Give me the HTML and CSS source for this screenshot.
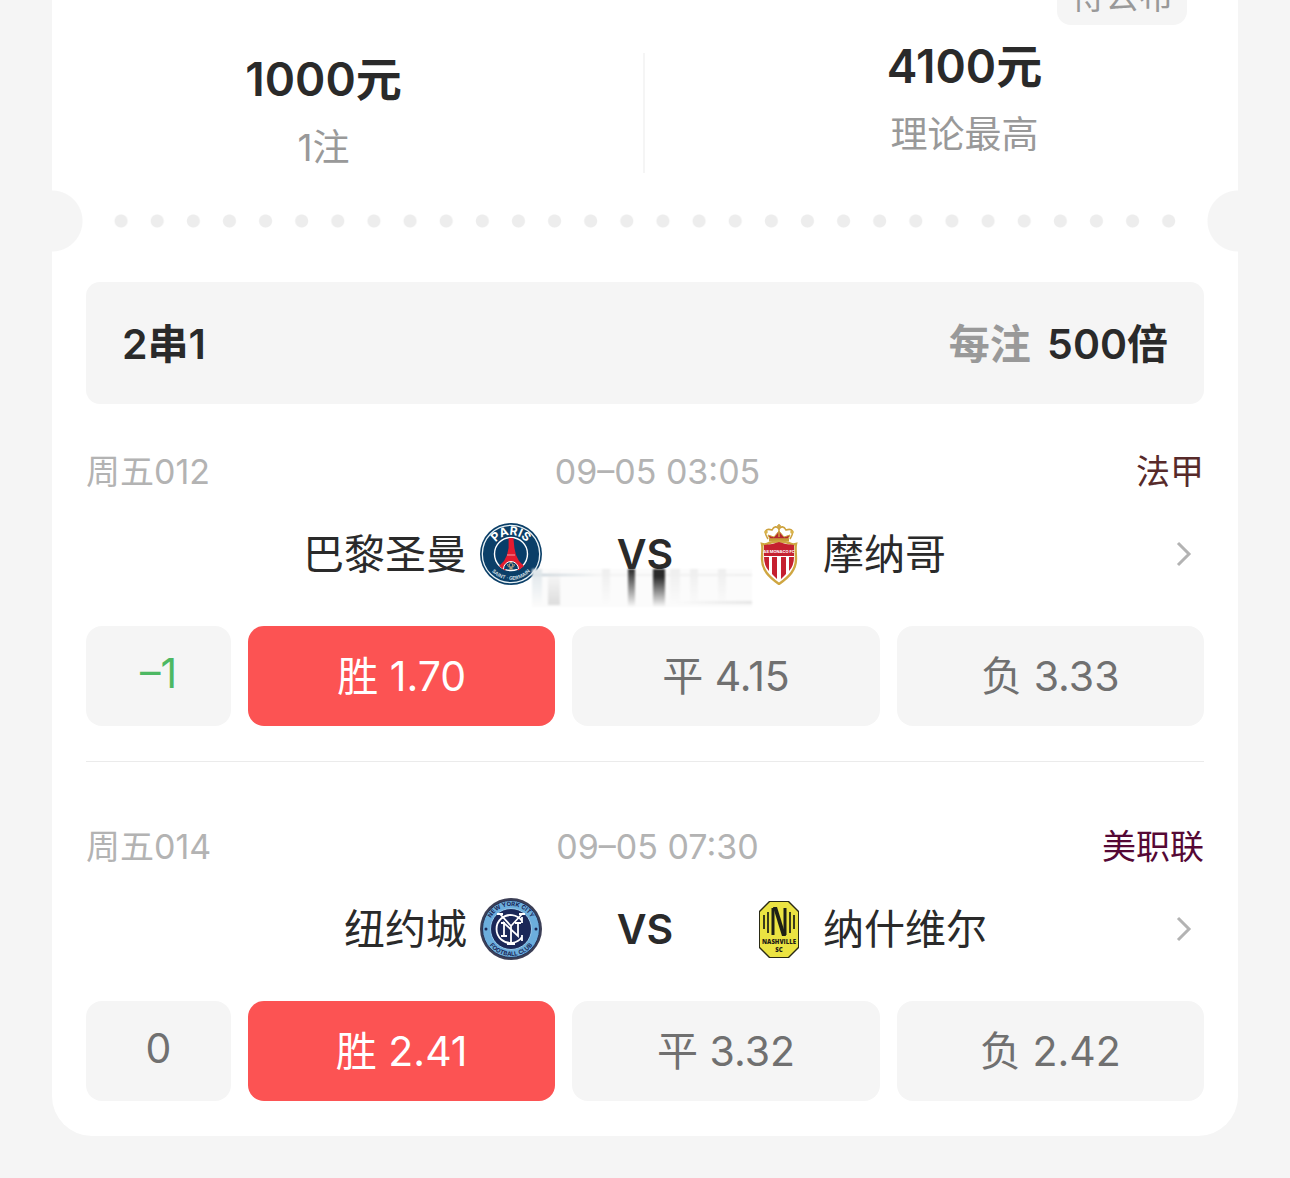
FILE: index.html
```html
<!DOCTYPE html>
<html lang="zh-CN">

<head>
    <meta charset="UTF-8">
    <meta name="viewport" content="width=device-width, initial-scale=1.0">
    <title>2串1</title>
    <link rel="stylesheet" href="styles.css">
</head>

<body>
    <main class="ticket">
        <section class="summary">
            <span class="badge">待公布</span>
            <div class="summary-item stake">
                <strong>1000元</strong>
                <span>1注</span>
            </div>
            <div class="summary-item prize">
                <strong>4100元</strong>
                <span>理论最高</span>
            </div>
        </section>

        <div class="perforation">
            <div class="dots"></div>
        </div>

        <div class="content">
            <div class="pass-bar">
                <strong>2串1</strong>
                <div class="multiple"><span>每注</span> <strong>500倍</strong></div>
            </div>

            <article class="match">
                <div class="match-info">
                    <span>周五012</span>
                    <time>09–05 03:05</time>
                    <span class="league ligue1">法甲</span>
                </div>
                <div class="teams">
                    <div class="team home">
                        <span>巴黎圣曼</span>
                        <svg class="crest" viewBox="0 0 62 62" aria-hidden="true">
                            <defs>
                                <path id="psgTop" d="M12 31a19 19 0 0 1 38 0" />
                                <path id="psgBottom" d="M5 31a26 26 0 0 0 52 0" />
                            </defs>
                            <circle cx="31" cy="31" r="31" fill="#0b3f68" />
                            <circle cx="31" cy="31" r="28.7" fill="none" stroke="#e8f2f6" stroke-width="1.3" />
                            <circle cx="31" cy="31" r="16.5" fill="#073d69" stroke="#fff" stroke-width="1.4" />
                            <path d="M28.6 15h4.8l1 10 1.6 7 3 6 5 5-5.5 4.500a8.500 8.500 0 0 0-13.800 0L19 43l5-5 3-6 1.600-7z" fill="#e31b2f" />
                            <path d="M27 32h8" stroke="#f6a2aa" stroke-width="1" />
                            <path d="M23.5 46a7.5 7.500 0 1 1 15 0" fill="#073d69" stroke="#fff" stroke-width="1" />
                            <path d="M31 39l2 3-2 4-2-4zM28 41c-1 3 1 3 3 3 2 0 4 0 3-3M29 46h4" fill="none" stroke="#c4a57e" stroke-width="1" />
                            <text class="psg-name"><textPath href="#psgTop" startOffset="50%">PARIS</textPath></text>
                            <text class="psg-small"><textPath href="#psgBottom" startOffset="50%">SAINT · GERMAIN</textPath></text>
                        </svg>
                    </div>
                    <div class="versus smudged">VS</div>
                    <div class="team away">
                        <svg class="crest" viewBox="0 0 62 62" aria-hidden="true">
                            <path d="M20 16C15 8 18 5 24 7c2-4 5-4 7-1 2-3 5-3 7 1 6-2 9 1 4 9" fill="none" stroke="#cda23e" stroke-width="1.6" />
                            <path d="M22 16l-2-4 6 2 5-6 5 6 6-2-2 4z" fill="#b52732" stroke="#cda23e" stroke-width="1" />
                            <path d="M31 1v7M29 3h4M31 8v6" stroke="#cda23e" stroke-width="1.5" />
                            <circle cx="18" cy="9" r="1.8" fill="#d9b44a" />
                            <circle cx="44" cy="9" r="1.8" fill="#d9b44a" />
                            <path d="M21 17h20" stroke="#c79b38" stroke-width="3" />
                            <path d="M14 21q4 1 7-1 10-3 20 0 3 2 7 1c-1 4 0 9 0 15 0 11-7 18-17 25C21 54 14 47 14 36c0-6 1-11 0-15z" fill="#fff" stroke="#cfa641" stroke-width="2.4" />
                            <path d="M16 22q7 0 15-3 8 3 15 3v11H16z" fill="#c5202f" />
                            <path d="M16 34h5v14q-5-5-5-14zM24 34h5v22l-5-5zM33 34h5v17l-5 5zM41 34h5q0 9-5 14z" fill="#c5202f" />
                            <text class="monaco-name" x="31" y="30">AS MONACO FC</text>
                        </svg>
                        <span>摩纳哥</span>
                        <a class="more" href="#" aria-label="比赛详情">
                            <svg viewBox="0 0 16 26"><path d="M2 2l11 11L2 24" /></svg>
                        </a>
                    </div>
                </div>
                <div class="odds">
                    <button type="button" class="handicap minus">–1</button>
                    <button type="button" class="selected">胜 1.70</button>
                    <button type="button">平 4.15</button>
                    <button type="button">负 3.33</button>
                </div>
            </article>

            <article class="match">
                <div class="match-info">
                    <span>周五014</span>
                    <time>09–05 07:30</time>
                    <span class="league mls">美职联</span>
                </div>
                <div class="teams">
                    <div class="team home">
                        <span>纽约城</span>
                        <svg class="crest" viewBox="0 0 62 62" aria-hidden="true">
                            <defs>
                                <path id="nycTop" d="M8 31a23 23 0 0 1 46 0" />
                                <path id="nycBottom" d="M4 31a27 27 0 0 0 54 0" />
                            </defs>
                            <circle cx="31" cy="31" r="31" fill="#3c3f56" />
                            <circle cx="31" cy="31" r="28.5" fill="#6caedd" stroke="#263256" stroke-width="1" />
                            <circle cx="31" cy="31" r="20.5" fill="#1b2858" stroke="#9acbeb" stroke-width="1" />
                            <circle cx="6" cy="31" r="1.5" fill="#1b2858" />
                            <circle cx="56" cy="31" r="1.5" fill="#1b2858" />
                            <g fill="none" stroke="#fff" stroke-width="1.8">
                                <path d="M42 23a14 14 0 1 0 0 16M42 19v6M42 37v6" />
                                <path d="M20 16l11 12v18M42 16L31 28M17 16h6M39 16h6M27 46h8" />
                                <path d="M24 38V25l14 13V25M21 38h6M21 25h4M35 25h6" />
                            </g>
                            <text class="nyc-name"><textPath href="#nycTop" startOffset="50%">NEW YORK CITY</textPath></text>
                            <text class="nyc-name"><textPath href="#nycBottom" startOffset="50%">FOOTBALL CLUB</textPath></text>
                        </svg>
                    </div>
                    <div class="versus">VS</div>
                    <div class="team away">
                        <svg class="crest" viewBox="0 0 62 62" aria-hidden="true">
                            <path d="M21 3h20l10 10v37L41 60H21L11 50V13z" fill="#2a2a15" />
                            <path d="M22 4h18l10 10v35L40 59H22L12 49V14z" fill="#ebe342" />
                            <path d="M16 17v14M20 14v21M42 14v21M46 17v14" stroke="#1e2016" stroke-width="1.7" />
                            <path d="M25 37V10M37 37V10" stroke="#1e2016" stroke-width="3" />
                            <path d="M25 9h4l9 29h-4z" fill="#1e2016" />
                            <text class="nashville-name" x="31" y="46">NASHVILLE</text>
                            <text class="nashville-name" x="31" y="54">SC</text>
                        </svg>
                        <span>纳什维尔</span>
                        <a class="more" href="#" aria-label="比赛详情">
                            <svg viewBox="0 0 16 26"><path d="M2 2l11 11L2 24" /></svg>
                        </a>
                    </div>
                </div>
                <div class="odds">
                    <button type="button" class="handicap">0</button>
                    <button type="button" class="selected">胜 2.41</button>
                    <button type="button">平 3.32</button>
                    <button type="button">负 2.42</button>
                </div>
            </article>
        </div>
    </main>
</body>

</html>
```
FILE: styles.css
```css
* {
    box-sizing: border-box;
}

body {
    margin: 0;
    padding: 0 52px 42px;
    background-color: #f5f5f5;
    color: #2a2a2a;
    font-family: Inter, "Noto Sans CJK SC", sans-serif;
}

.ticket {
    background-color: #fff;
    border-radius: 0 0 40px 40px;
}

/* Summary */
.summary {
    position: relative;
    display: grid;
    grid-template-columns: 1fr 1fr;
    padding-top: 53px;
}

.badge {
    position: absolute;
    top: -31px;
    right: 51px;
    padding: 0 14px;
    border-radius: 14px;
    background-color: #f5f5f5;
    color: #999;
    font-size: 34px;
    line-height: 56px;
}

.summary-item {
    display: flex;
    flex-direction: column;
    align-items: center;
    height: 120px;
}

.summary-item strong {
    margin-top: -7px;
    font-size: 46px;
    font-weight: 600;
    line-height: 66px;
}

.summary-item span {
    margin-top: 10px;
    color: #999;
    font-size: 37px;
    line-height: 52px;
}

.stake {
    padding-right: 48px;
    border-right: 2px solid #f5f5f5;
}

.prize {
    padding-left: 46px;
}

.prize strong {
    margin-top: -20px;
}

/* Tear line */
.perforation {
    display: flex;
    align-items: center;
    height: 62px;
    margin-top: 17px;
    background: radial-gradient(circle at 0 50%, #f5f5f5 30px, transparent 31px),
        radial-gradient(circle at 100% 50%, #f5f5f5 30px, transparent 31px);
}

.dots {
    flex: 1;
    height: 16px;
    margin: 0 51px;
    background-image: radial-gradient(circle, #ededed 6px, transparent 7px);
    background-size: 36px 16px;
    background-repeat: round no-repeat;
}

.content {
    padding: 30px 34px 35px;
}

.pass-bar {
    display: flex;
    align-items: center;
    justify-content: space-between;
    height: 122px;
    padding: 0 36px 4px;
    border-radius: 14px;
    background-color: #f5f5f5;
    font-size: 41px;
    font-weight: 600;
}

.pass-bar strong {
    font-weight: 600;
}

.multiple span {
    margin-right: 6px;
    color: #999;
}

/* Matches */
.match {
    padding-top: 43px;
}

.match + .match {
    margin-top: 35px;
    padding-top: 60px;
    border-top: 1px solid #ebebeb;
}

.match-info {
    display: grid;
    grid-template-columns: 1fr auto 1fr;
    margin-bottom: 26px;
    color: #b3b3b3;
    font-size: 34px;
    line-height: 50px;
}

.match-info time {
    padding-left: 25px;
}

.league {
    text-align: right;
}

.ligue1 {
    color: #572a2a;
}

.mls {
    color: #550835;
}

.teams {
    display: grid;
    grid-template-columns: 1fr 206px 1fr;
    align-items: center;
    height: 62px;
    margin-bottom: 41px;
    font-size: 41px;
    line-height: 62px;
}

.team {
    display: flex;
    align-items: center;
    gap: 13px;
}

.home {
    justify-content: flex-end;
}

.crest {
    width: 62px;
    height: 62px;
}

.versus {
    position: relative;
    font-weight: 600;
    text-align: center;
}

/* Faded smear below the first VS */
.smudged::after {
    content: "";
    position: absolute;
    top: 46px;
    left: -10px;
    width: 220px;
    height: 38px;
    background:
        linear-gradient(#2a2a2a, transparent) 96px 0 / 7px 38px,
        linear-gradient(#2a2a2a 20%, transparent) 121px 0 / 12px 38px,
        linear-gradient(transparent, #ddd) 16px 0 / 12px 36px,
        linear-gradient(#dfe6ea, transparent) 0 0 / 10px 36px,
        linear-gradient(#eee, transparent) 70px 0 / 8px 36px,
        linear-gradient(#eee, transparent) 138px 0 / 10px 36px,
        linear-gradient(#eee, transparent) 158px 0 / 8px 36px,
        linear-gradient(#eee, transparent) 186px 0 / 8px 36px,
        linear-gradient(90deg, #b9c7d0, #f3f3f3 30%, #eee) 0 5px / 220px 2px,
        linear-gradient(90deg, transparent 65%, #e5e5e5) 0 32px / 220px 3px,
        #fbfbfb;
    background-repeat: no-repeat;
    filter: blur(1px);
}

.more {
    margin-right: 12px;
    margin-left: auto;
    line-height: 0;
}

.more svg {
    width: 16px;
    height: 26px;
    fill: none;
    stroke: #b3b3b3;
    stroke-width: 3;
}

/* Crest lettering */
.crest text {
    font-family: Inter, sans-serif;
    font-weight: 700;
    text-anchor: middle;
}

.crest .psg-name {
    fill: #fff;
    font-size: 12px;
}

.crest .psg-small {
    fill: #c3d5de;
    font-size: 5px;
}

.crest .monaco-name {
    fill: #fff;
    font-size: 4px;
}

.crest .nyc-name {
    fill: #1b2858;
    font-size: 6px;
}

.crest .nashville-name {
    fill: #1e2016;
    font-family: "Open Sans", sans-serif;
    font-size: 6px;
    font-weight: 800;
}

/* Odds */
.odds {
    display: grid;
    grid-template-columns: 145px 1fr 1fr 1fr;
    gap: 17px;
}

.odds button {
    height: 100px;
    padding: 0 0 6px;
    border: none;
    border-radius: 16px;
    background-color: #f5f5f5;
    color: #707070;
    font-family: inherit;
    font-size: 41px;
    cursor: pointer;
}

.odds .selected {
    background-color: #fc5353;
    color: #fff;
}

.odds .minus {
    color: #4db863;
}
```
